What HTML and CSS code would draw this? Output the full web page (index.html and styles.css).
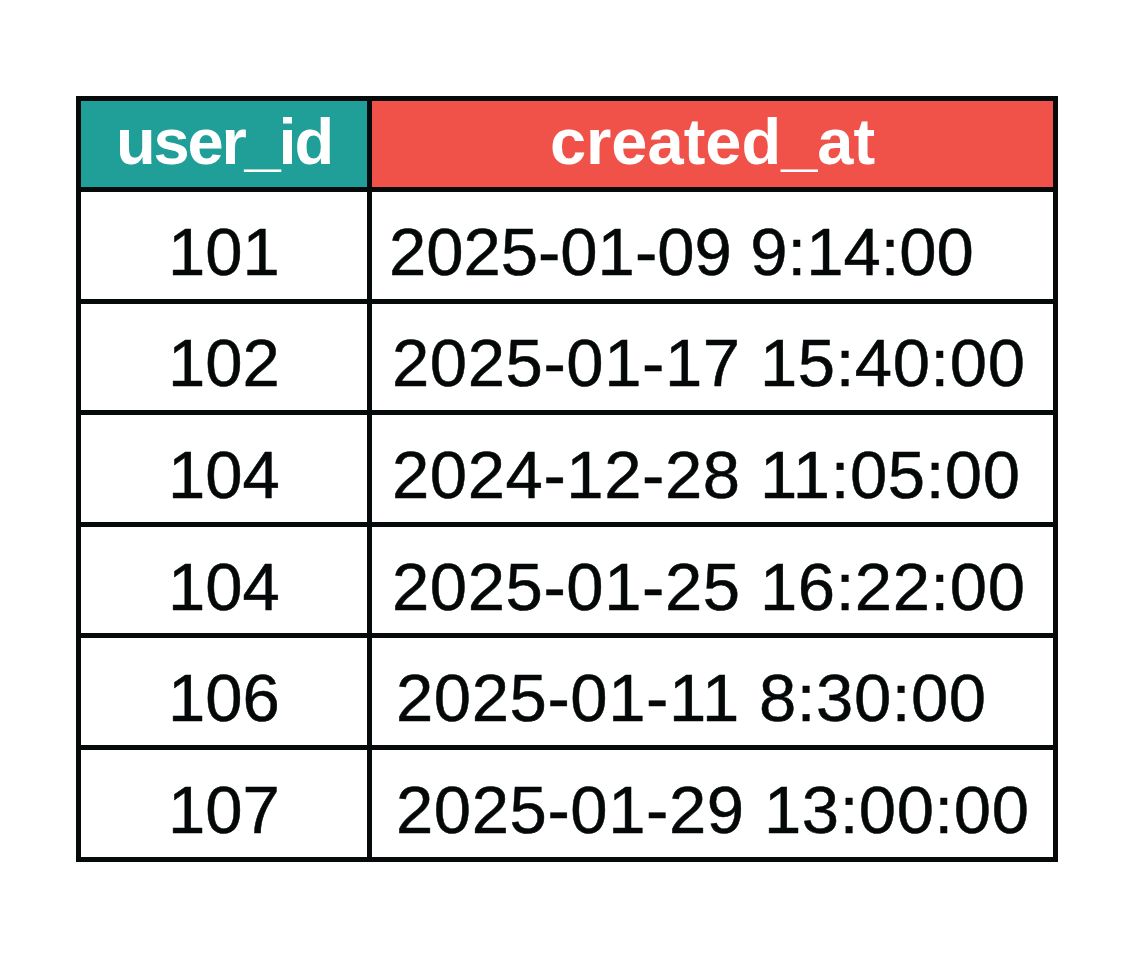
FILE: index.html
```html
<!DOCTYPE html>
<html>
<head>
<meta charset="utf-8">
<link rel="stylesheet" href="styles.css">
</head>
<body>
<div class="table">
  <div class="cell head head-id"><span class="tight">user_id</span></div>
  <div class="cell head head-at">created_at</div>

  <div class="cell id">101</div>
  <div class="cell ts pad-a">2025-01-09 9:14:00</div>

  <div class="cell id">102</div>
  <div class="cell ts pad-b">2025-01-17 15:40:00</div>

  <div class="cell id">104</div>
  <div class="cell ts pad-b">2024-12-28 11:05:00</div>

  <div class="cell id">104</div>
  <div class="cell ts pad-b">2025-01-25 16:22:00</div>

  <div class="cell id">106</div>
  <div class="cell ts pad-c">2025-01-11 8:30:00</div>

  <div class="cell id">107</div>
  <div class="cell ts pad-c">2025-01-29 13:00:00</div>
</div>
</body>
</html>
```

FILE: styles.css
```css
html, body {
  margin: 0;
  padding: 0;
  background: #ffffff;
}

body {
  padding: 96px 0 0 76px;
  font-family: "Liberation Sans", Arial, sans-serif;
}

.table {
  display: grid;
  grid-template-columns: 286px 681px;
  grid-template-rows: 86px repeat(6, 106.6px);
  gap: 5px;
  padding: 5px;
  width: max-content;
  background: #060a0a;
}

.cell {
  display: flex;
  align-items: center;
  background: #ffffff;
  color: #050808;
  line-height: 1;
}

.head {
  justify-content: center;
  color: #ffffff;
  font-weight: bold;
  font-size: 65px;
  padding-bottom: 6px;
  box-sizing: border-box;
}

.head-id {
  background: #1f9f97;
}

.head-at {
  background: #f0524a;
}

.tight {
  letter-spacing: -2.2px;
}

.id, .ts {
  font-size: 67px;
  padding-top: 12px;
  box-sizing: border-box;
  -webkit-text-stroke: 0.5px #050808;
}

.id {
  justify-content: center;
}

.ts {
  letter-spacing: 0.6px;
}

.pad-a { padding-left: 17px; letter-spacing: 0; }
.pad-b { padding-left: 20px; }
.pad-c { padding-left: 24px; }
```
